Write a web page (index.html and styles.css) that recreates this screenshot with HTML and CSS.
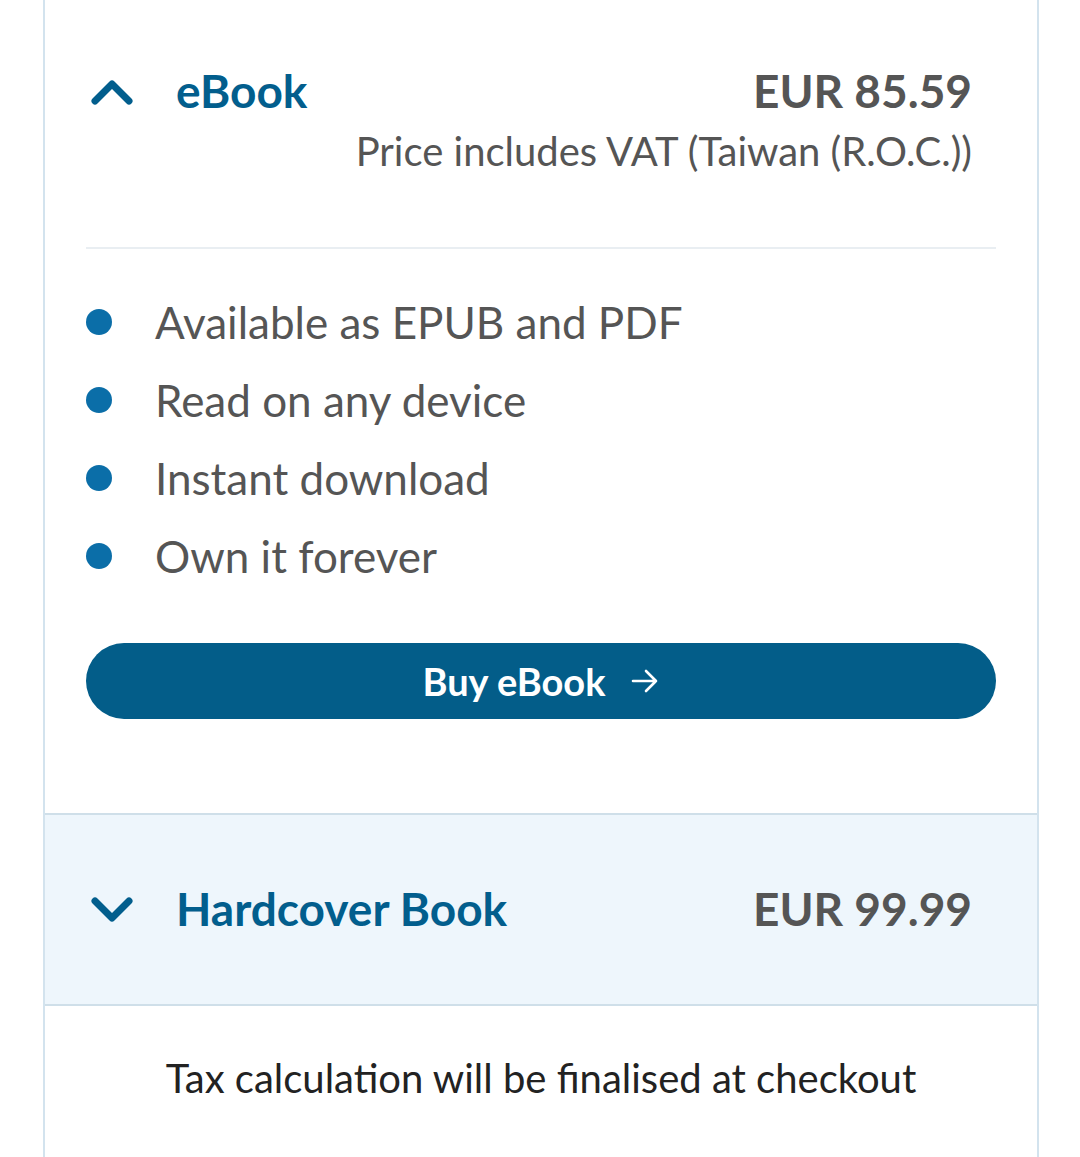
FILE: index.html
```html
<!DOCTYPE html>
<html lang="en">
<head>
<meta charset="utf-8">
<title>Buy options</title>
<link rel="stylesheet" href="styles.css">
</head>
<body>
<div class="card">
  <section class="option option-open">
    <div class="option-head">
      <span class="chev">
        <svg width="42" height="26" viewBox="0 0 42 26"><path d="M4 22 L21 5 L38 22" fill="none" stroke="#025e8d" stroke-width="7" stroke-linecap="round" stroke-linejoin="round"/></svg>
      </span>
      <h2 class="title">eBook</h2>
      <div class="price-block">
        <div class="price">EUR 85.59</div>
        <div class="vat">Price includes VAT (Taiwan (R.O.C.))</div>
      </div>
    </div>
    <hr class="divider">
    <ul class="features">
      <li>Available as EPUB and PDF</li>
      <li>Read on any device</li>
      <li>Instant download</li>
      <li>Own it forever</li>
    </ul>
    <button class="buy">Buy eBook
      <svg width="30" height="30" viewBox="0 0 30 30"><path d="M3 15 H26 M16 5 L26 15 L16 25" fill="none" stroke="#fff" stroke-width="2.6" stroke-linecap="round" stroke-linejoin="round"/></svg>
    </button>
  </section>
  <section class="option option-closed">
    <div class="option-head closed-head">
      <span class="chev">
        <svg width="42" height="26" viewBox="0 0 42 26"><path d="M4 5 L21 22 L38 5" fill="none" stroke="#025e8d" stroke-width="7" stroke-linecap="round" stroke-linejoin="round"/></svg>
      </span>
      <h2 class="title">Hardcover Book</h2>
      <div class="price-block">
        <div class="price">EUR 99.99</div>
      </div>
    </div>
  </section>
  <p class="tax">Tax calculation will be finalised at checkout</p>
</div>
</body>
</html>
```
FILE: styles.css
```css
* { box-sizing: border-box; }
html, body { margin: 0; padding: 0; background: #fff; }
body { font-family: Lato, "Open Sans", sans-serif; color: #555; }

.card {
  margin: 0 41px 0 43px;
  border-left: 2px solid #d3e3ee;
  border-right: 2px solid #d3e3ee;
  min-height: 1157px;
}

.option-open { padding: 0 41px 94px 41px; }

.option-head {
  display: flex;
  align-items: flex-start;
  padding-top: 63px;
}
.chev {
  width: 90px;
  flex: none;
  padding-left: 5px;
  padding-top: 16px;
}
.chev svg { display: block; }
.title {
  margin: 0;
  font-size: 46px;
  line-height: 56px;
  font-weight: 700;
  color: #025e8d;
  flex: 1;
}
.price-block {
  text-align: right;
  padding-right: 24px;
}
.price {
  font-size: 46px;
  line-height: 56px;
  font-weight: 700;
  color: #555;
}
.vat {
  font-size: 40px;
  line-height: 64px;
  color: #555;
}

.divider {
  border: 0;
  border-top: 2px solid #e9eef2;
  margin: 64px 0 34px;
}

.features {
  list-style: none;
  margin: 0;
  padding: 0;
}
.features li {
  display: flex;
  align-items: center;
  height: 78px;
  font-size: 44px;
  color: #555;
}
.features li::before {
  content: "";
  width: 26px;
  height: 26px;
  border-radius: 50%;
  background: #0b6ea8;
  margin-right: 43px;
  flex: none;
}

.buy {
  margin-top: 48px;
  width: 100%;
  height: 76px;
  border: 0;
  border-radius: 38px;
  background: #035d89;
  color: #fff;
  font-family: Lato, "Open Sans", sans-serif;
  font-size: 38px;
  font-weight: 700;
  display: flex;
  align-items: center;
  justify-content: center;
  gap: 24px;
}
.buy svg { display: block; }

.option-closed {
  background: #eef6fc;
  border-top: 2px solid #cfdfe9;
  border-bottom: 2px solid #cfdfe9;
  padding: 0 41px;
  height: 193px;
}
.closed-head {
  padding-top: 66px;
  align-items: center;
}
.closed-head .chev { padding-top: 0; }

.tax {
  margin: 0;
  padding-top: 48px;
  text-align: center;
  font-size: 40px;
  color: #222;
}
```
